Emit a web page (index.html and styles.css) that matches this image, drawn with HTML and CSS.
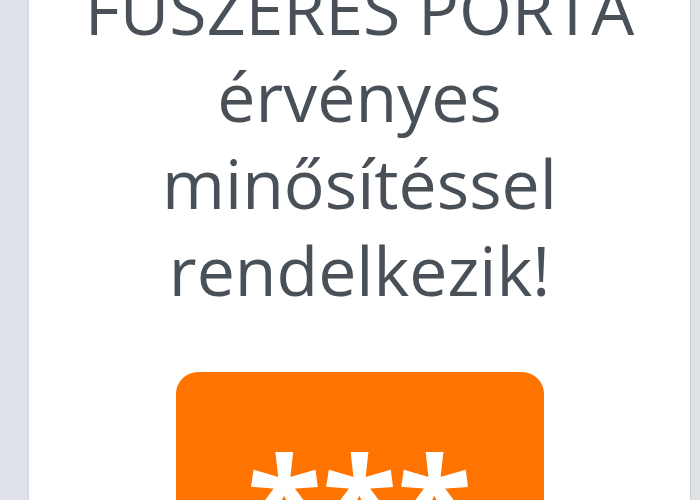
FILE: index.html
```html
<!DOCTYPE html>
<html lang="hu">
<head>
<meta charset="utf-8">
<link rel="stylesheet" href="styles.css">
</head>
<body>
<div class="page">
  <main class="card">
    <h1 class="title">FŰSZERES PORTA<br>érvényes<br>minősítéssel<br>rendelkezik!</h1>
    <div class="badge">***</div>
  </main>
  <div class="rail"></div>
</div>
</body>
</html>
```

FILE: styles.css
```css
html, body {
  margin: 0;
  padding: 0;
  height: 100%;
  overflow: hidden;
}
body {
  background: #dfe2e9;
  font-family: "Open Sans", "Noto Sans", sans-serif;
}
.page {
  display: flex;
  height: 100%;
  padding-left: 29px;
}
.card {
  width: 661px;
  background: #ffffff;
  box-shadow: -1px 0 2px rgba(0,0,0,0.06);
  border-right: 1px solid #c9ced3;
  display: flex;
  flex-direction: column;
  align-items: center;
  margin-top: -35px;
}
.rail {
  flex: 1;
  background: #dee2e5;
}
.title {
  margin: 0;
  font-weight: 400;
  font-size: 68px;
  line-height: 87px;
  color: #495057;
  text-align: center;
  white-space: nowrap;
}
.badge {
  margin-top: 59px;
  width: 368px;
  height: 200px;
  background: #ff7400;
  border-radius: 22px;
  color: #ffffff;
  font-weight: 700;
  font-size: 138px;
  line-height: 1;
  text-align: center;
  padding-top: 62px;
  box-sizing: border-box;
}
```
